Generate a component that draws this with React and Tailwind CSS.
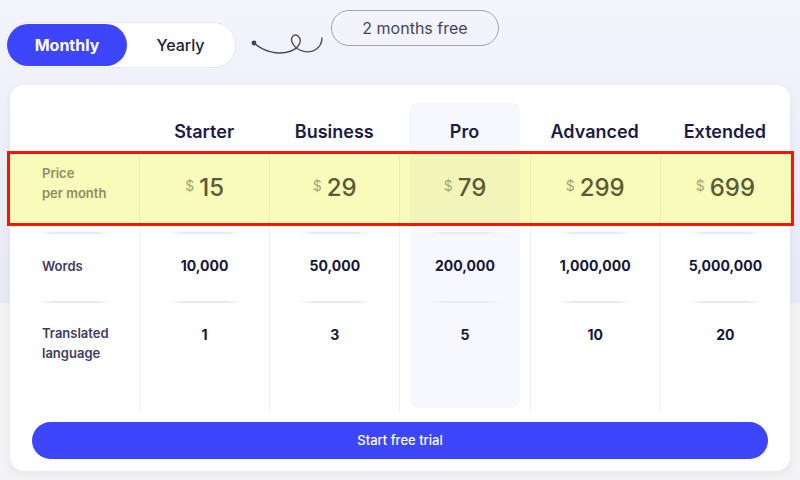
import React from "react";

const plans = [
  { name: "Starter", price: "15", words: "10,000", langs: "1" },
  { name: "Business", price: "29", words: "50,000", langs: "3" },
  { name: "Pro", price: "79", words: "200,000", langs: "5", featured: true },
  { name: "Advanced", price: "299", words: "1,000,000", langs: "10" },
  { name: "Extended", price: "699", words: "5,000,000", langs: "20" },
];

const Divider = () => (
  <div className="mx-auto h-[2px] w-[72px] bg-[linear-gradient(to_right,transparent,#e9e9f6_20%,#e9e9f6_80%,transparent)]" />
);

const Squiggle = () => (
  <svg width="78" height="32" viewBox="0 0 78 32" fill="none" className="mt-[28px] ml-[13px]">
    <circle cx="5" cy="15" r="2.4" fill="#3d3d5c" />
    <path
      d="M5 15 C14 23 29 28 42 23 C50 20 54 12 49 8 C45 5 40 10 44 16 C48 23 59 26 66 22 C71 19 73 15 73 10"
      stroke="#4a4a66"
      strokeWidth="1.4"
      strokeLinecap="round"
    />
  </svg>
);

function PlanColumn({ plan }) {
  const hl = plan.featured ? "bg-[#f7f7fe]" : "";
  return (
    <div className="flex flex-col">
      <div className="h-[67px] px-[10px] flex flex-col">
        <div className={`mt-[18px] flex-1 rounded-t-[8px] ${hl} flex justify-center pt-[15px]`}>
          <span className="text-[18px] font-semibold leading-[28px] text-[#1b1b45]">{plan.name}</span>
        </div>
      </div>
      <div className="border-l border-[#efeff6] px-[10px] h-[260px] flex flex-col">
        <div className={`flex-1 mb-[4px] rounded-b-[8px] ${hl} flex flex-col`}>
          <div className="h-[75px] flex items-center justify-center gap-[5px] pb-[3px]">
            <span className="text-[14px] text-[#8a8aa0] -mt-[6px]">$</span>
            <span className="text-[24px] font-medium text-[#24244a] leading-none">{plan.price}</span>
          </div>
          <div className="pt-[5px]">
            <Divider />
            <div className="h-[67px] pb-[4px] flex items-center justify-center text-[14px] font-bold text-[#16163a]">
              {plan.words}
            </div>
          </div>
          <div>
            <Divider />
            <div className="pt-[22px] text-center text-[14px] font-bold leading-[20px] text-[#16163a]">
              {plan.langs}
            </div>
          </div>
        </div>
      </div>
    </div>
  );
}

export default function App() {
  return (
    <div
      className="relative h-[480px] w-[800px] overflow-hidden bg-[linear-gradient(to_bottom,#f4f4fd_0px,#e9e9f7_303px,#f4f4f6_303px)]"
      style={{ fontFamily: "Inter, 'Noto Sans', sans-serif" }}
    >
      {/* top bar */}
      <div className="flex h-[85px] items-start">
        <div className="ml-[5px] mt-[22px] flex h-[46px] w-[231px] items-center rounded-full border border-[#e8e8f4] bg-white p-[1px]">
          <button className="h-[42px] w-[120px] rounded-full bg-[#3d46fb] text-[16px] font-bold text-white">
            Monthly
          </button>
          <button className="flex-1 text-[16px] font-medium text-[#1d1d3a]">Yearly</button>
        </div>
        <Squiggle />
        <div className="ml-[4px] mt-[10px] flex h-[36px] w-[168px] items-center justify-center rounded-full border border-[#a3a3b3] text-[16px] text-[#44445e]">
          2 months free
        </div>
      </div>

      {/* card */}
      <div className="mx-[10px] h-[386px] rounded-[14px] bg-white shadow-[0_4px_10px_rgba(60,60,110,0.08)] flex flex-col">
        <div className="grid grid-cols-[129px_repeat(5,1fr)]">
          <div className="flex flex-col">
            <div className="h-[67px]" />
            <div className="h-[260px] pl-[32px] flex flex-col text-[13px] font-semibold leading-[20px] text-[#3e3e60]">
              <div className="h-[75px] pt-[11px] text-[#6b6b86]">
                <div>Price</div>
                <div>per month</div>
              </div>
              <div className="pt-[5px] -ml-[32px]">
                <Divider />
                <div className="h-[67px] pb-[4px] pl-[32px] flex items-center">Words</div>
              </div>
              <div className="-ml-[32px]">
                <Divider />
                <div className="pl-[32px] pt-[20px]">
                  <div>Translated</div>
                  <div>language</div>
                </div>
              </div>
            </div>
          </div>
          {plans.map((p) => (
            <PlanColumn key={p.name} plan={p} />
          ))}
        </div>
        <div className="px-[22px] pt-[10px]">
          <button className="h-[37px] w-full rounded-full bg-[#3d46fb] text-[13px] font-medium text-white">
            Start free trial
          </button>
        </div>
      </div>

      {/* highlight annotation */}
      <div className="absolute left-[7px] top-[151px] h-[75px] w-[787px] border-[3px] border-[#ff1200] bg-[rgba(228,240,0,0.27)]" />
    </div>
  );
}
